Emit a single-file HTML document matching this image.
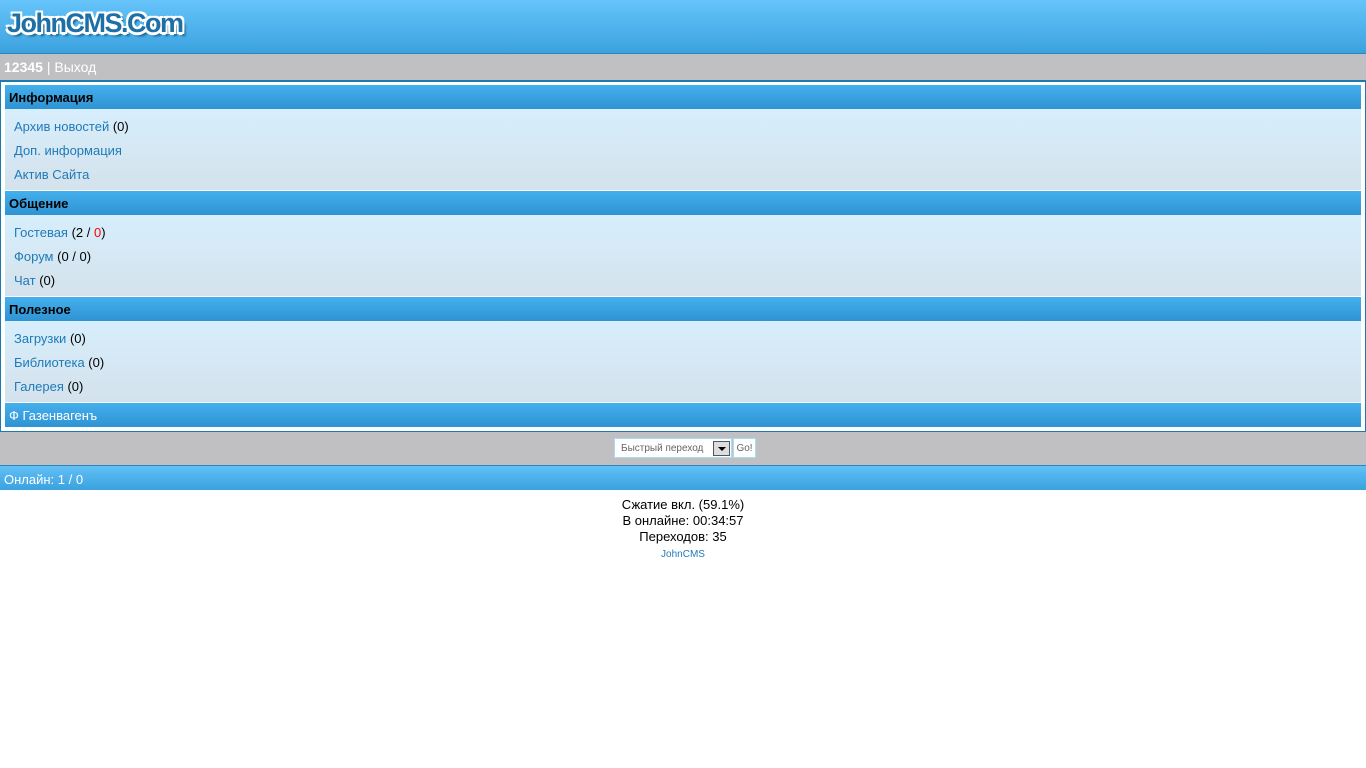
<!DOCTYPE html>
<html><head><meta charset="utf-8"><style>
body{margin:0;font-family:"Liberation Sans",Arial,sans-serif;font-size:13px;background:#fff;}
a{color:#1f7ab8;text-decoration:none}
.hdr{height:53px;background:linear-gradient(#66c4fa,#3ba2df);border-bottom:1px solid #2a86bd;position:relative}
.logo{position:absolute;left:7px;top:8px;font-family:"Liberation Sans",sans-serif;font-weight:bold;font-size:27px;color:#1d6fa6;letter-spacing:-1.5px;text-shadow:-2px -2px 0 #fff,2px -2px 0 #fff,-2px 2px 0 #fff,2px 2px 0 #fff,0 3px 0 #fff,3px 4px 2px #1a5f8a}
.gray{background:#c0c0c2;height:26px;line-height:27px;padding-left:4px;color:#fff;font-size:14px}
.main{border:1px solid #1b7bb1;border-top:2px solid #1b7bb1;padding:3px 4px 4px 4px;margin:0}
.ph{height:24px;line-height:25px;background:linear-gradient(#44b0ee,#2f93d2);padding-left:4px;font-weight:bold;color:#000;font-size:13px}
.list{background:linear-gradient(#d7eefc,#d4e2ec);padding:6px 9px 3px;margin-bottom:1px}
.list div{height:24px;line-height:24px;font-size:13px}
.gray2{background:#c0c0c2;height:33px;text-align:center;position:relative;border-bottom:1px solid #2a86bd}
.sel{position:absolute;left:614px;top:6px;width:118px;height:20px;border:1px solid #a8ddf8;background:#fff;font-size:10px;color:#666;line-height:20px;box-sizing:border-box;text-align:left;padding-left:6px}
.arr{position:absolute;right:1px;top:2px;width:15px;height:13px;border:1px solid #555;background:#ddd}
.arr:after{content:"";position:absolute;left:4px;top:5px;border:4px solid transparent;border-top:4px solid #000;border-bottom:0}
.go{position:absolute;left:733px;top:6px;width:23px;height:20px;border:1px solid #a8ddf8;background:#fff;font-size:10px;color:#666;line-height:20px;box-sizing:border-box}
.on{height:24px;line-height:27px;background:linear-gradient(#62c0f6,#3aa2df);color:#fff;padding-left:4px;font-size:13px}
.foot{text-align:center;padding-top:7px;font-size:13px;line-height:16px;color:#000}
</style></head><body>
<div class="hdr"><div class="logo">JohnCMS.Com</div></div>
<div class="gray"><b>12345</b> | Выход</div>
<div class="main">
<div class="ph">Информация</div>
<div class="list"><div><a>Архив новостей</a> (0)</div><div><a>Доп. информация</a></div><div><a>Актив Сайта</a></div></div>
<div class="ph">Общение</div>
<div class="list"><div><a>Гостевая</a> (2 / <span style="color:red">0</span>)</div><div><a>Форум</a> (0 / 0)</div><div><a>Чат</a> (0)</div></div>
<div class="ph">Полезное</div>
<div class="list"><div><a>Загрузки</a> (0)</div><div><a>Библиотека</a> (0)</div><div><a>Галерея</a> (0)</div></div>
<div class="ph" style="font-weight:normal;color:#fff">Ф Газенвагенъ</div>
</div>
<div class="gray2"><div class="sel">Быстрый переход<div class="arr"></div></div><div class="go">Go!</div></div>
<div class="on">Онлайн: 1 / 0</div>
<div class="foot">Сжатие вкл. (59.1%)<br>В онлайне: 00:34:57<br>Переходов: 35<br><a style="font-size:10px">JohnCMS</a></div>
</body></html>
